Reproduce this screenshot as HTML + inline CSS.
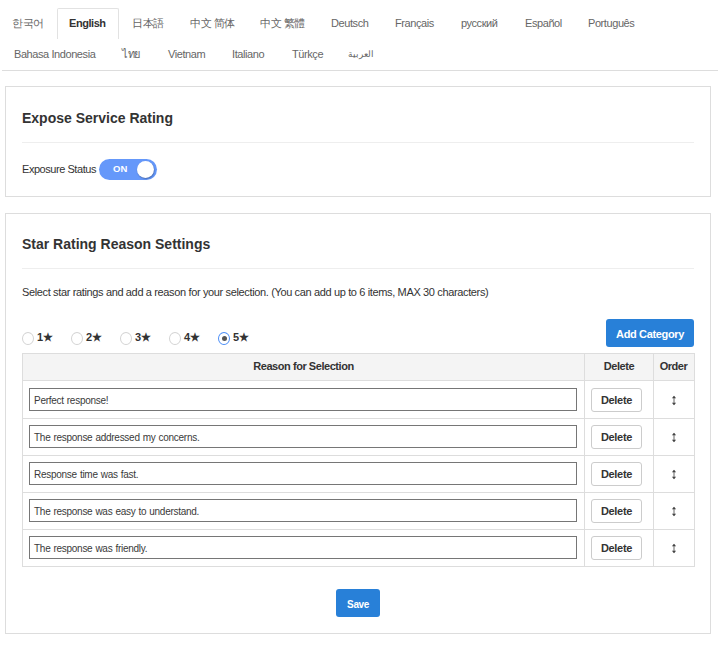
<!DOCTYPE html>
<html><head><meta charset="utf-8">
<style>
*{box-sizing:border-box;margin:0;padding:0}
html,body{width:718px;height:646px;overflow:hidden;background:#fff;font-family:"Liberation Sans",sans-serif;color:#333}
.a{position:absolute;white-space:nowrap}
.tab{font-size:11px;line-height:13px;color:#666;letter-spacing:-0.42px}
.tabact{position:absolute;left:57px;top:8px;width:62px;height:31px;border:1px solid #e2e2e2;border-bottom:none;border-radius:2px 2px 0 0;background:#fff}
.navline{position:absolute;left:2px;top:70px;width:716px;height:1px;background:#ddd}
.box{position:absolute;left:5px;width:706px;border:1px solid #ddd;background:#fff}
.h{font-size:14px;font-weight:bold;line-height:17px;color:#333}
.hr{position:absolute;left:22px;width:672px;height:1px;background:#eee}
.t11{font-size:11px;line-height:13px;color:#333;letter-spacing:-0.45px}
.toggle{position:absolute;left:99px;top:159px;width:58px;height:21px;border-radius:11px;background:#6598fa}
.toggle .on{position:absolute;left:14px;top:3px;font-size:9.5px;letter-spacing:0.1px;line-height:13px;font-weight:bold;color:#fff}
.toggle .knob{position:absolute;left:38px;top:2px;width:17px;height:17px;border-radius:50%;background:#fff;box-shadow:0.5px 1px 1.5px rgba(0,0,0,.3)}
.radio{position:absolute;top:332px;width:12px;height:13px;border:1px solid #d4d4d4;border-radius:50%;background:#fff}
.radio.sel{border-color:#4d8ff7}
.radio.sel::after{content:"";position:absolute;left:2.5px;top:3px;width:5px;height:5px;border-radius:50%;background:#555}
.rl{font-size:11px;font-weight:bold;line-height:13px;color:#333;letter-spacing:-0.4px}
.btnblue{position:absolute;background:#2880d8;border-radius:3px;color:#fff;font-weight:bold;font-size:12px;text-align:center}
.tbl{position:absolute;left:22px;top:353px;width:673px;height:214px;border:1px solid #ddd}
.thead{position:absolute;left:0;top:0;width:671px;height:27px;background:#f4f4f4;border-bottom:1px solid #ddd}
.vl{position:absolute;top:0;width:1px;height:212px;background:#ddd}
.hl{position:absolute;left:0;width:671px;height:1px;background:#ddd}
.th{position:absolute;top:6px;font-size:11px;font-weight:bold;line-height:13px;color:#333;letter-spacing:-0.45px;text-align:center}
.inp{position:absolute;left:6px;width:548px;height:23px;border:1px solid #767676;border-radius:0;background:#fff}
.inp span{position:absolute;left:4px;top:5.5px;font-size:10px;line-height:12px;color:#3a3a3a;letter-spacing:-0.27px;word-spacing:0.5px}
.del{position:absolute;left:568px;width:51px;height:24px;border:1px solid #ccc;border-radius:3px;background:#fff}
.del span{position:absolute;left:0;width:49px;text-align:center;top:4.5px;font-size:11px;font-weight:bold;line-height:13px;color:#333;letter-spacing:-0.3px}
.ord{position:absolute;left:646.5px}
</style></head><body>
<div class="tabact"></div>
<div class="navline"></div>
<div class="a tab" style="left:12px;top:17px">한국어</div>
<div class="a tab" style="left:69px;top:17px;font-weight:bold;color:#333;letter-spacing:-0.45px">English</div>
<div class="a tab" style="left:132px;top:17px">日本語</div>
<div class="a tab" style="left:190px;top:17px">中文 简体</div>
<div class="a tab" style="left:260px;top:17px">中文 繁體</div>
<div class="a tab" style="left:331px;top:17px">Deutsch</div>
<div class="a tab" style="left:395px;top:17px">Français</div>
<div class="a tab" style="left:461px;top:17px">русский</div>
<div class="a tab" style="left:525px;top:17px">Español</div>
<div class="a tab" style="left:588px;top:17px">Português</div>
<div class="a tab" style="left:14px;top:48px">Bahasa Indonesia</div>
<div class="a tab" style="left:122px;top:48px">ไทย</div>
<div class="a tab" style="left:168px;top:48px">Vietnam</div>
<div class="a tab" style="left:232px;top:48px">Italiano</div>
<div class="a tab" style="left:292px;top:48px">Türkçe</div>
<div class="a tab" style="left:348px;top:48px;font-size:9px">العربية</div>

<div class="box" style="top:86px;height:111px"></div>
<div class="a h" style="left:22px;top:110px">Expose Service Rating</div>
<div class="hr" style="top:142px"></div>
<div class="a t11" style="left:22px;top:163px">Exposure Status</div>
<div class="toggle"><div class="on">ON</div><div class="knob"></div></div>

<div class="box" style="top:213px;height:421px"></div>
<div class="a h" style="left:22px;top:236px">Star Rating Reason Settings</div>
<div class="hr" style="top:268px"></div>
<div class="a t11" style="left:22px;top:286px;letter-spacing:-0.36px">Select star ratings and add a reason for your selection. (You can add up to 6 items, MAX 30 characters)</div>

<div class="radio" style="left:22px"></div><div class="a rl" style="left:37px;top:331px">1★</div>
<div class="radio" style="left:71px"></div><div class="a rl" style="left:86px;top:331px">2★</div>
<div class="radio" style="left:120px"></div><div class="a rl" style="left:135px;top:331px">3★</div>
<div class="radio" style="left:169px"></div><div class="a rl" style="left:184px;top:331px">4★</div>
<div class="radio sel" style="left:218px"></div><div class="a rl" style="left:233px;top:331px">5★</div>

<div class="btnblue" style="left:606px;top:319px;width:88px;height:28px;line-height:30px;font-size:11px;letter-spacing:-0.35px">Add Category</div>

<div class="tbl">
  <div class="thead"></div>
  <div class="vl" style="left:561px"></div>
  <div class="vl" style="left:630px"></div>
  <div class="th" style="left:0;width:561px">Reason for Selection</div>
  <div class="th" style="left:562px;width:68px">Delete</div>
  <div class="th" style="left:630px;width:41px">Order</div>
  <div class="hl" style="top:64px"></div>
  <div class="hl" style="top:101px"></div>
  <div class="hl" style="top:138px"></div>
  <div class="hl" style="top:175px"></div>

  <div class="inp" style="top:34px"><span>Perfect response!</span></div>
  <div class="del" style="top:34px"><span>Delete</span></div>
  <svg class="ord" style="top:41px" width="8" height="11" viewBox="0 0 8 11"><path d="M4 1.5V9.5" stroke="#555" stroke-width="0.9"/><path d="M1.9 3.2L4 0.7L6.1 3.2Z M1.9 7.8L4 10.3L6.1 7.8Z" fill="#444"/></svg>

  <div class="inp" style="top:71px"><span>The response addressed my concerns.</span></div>
  <div class="del" style="top:71px"><span>Delete</span></div>
  <svg class="ord" style="top:78px" width="8" height="11" viewBox="0 0 8 11"><path d="M4 1.5V9.5" stroke="#555" stroke-width="0.9"/><path d="M1.9 3.2L4 0.7L6.1 3.2Z M1.9 7.8L4 10.3L6.1 7.8Z" fill="#444"/></svg>

  <div class="inp" style="top:108px"><span>Response time was fast.</span></div>
  <div class="del" style="top:108px"><span>Delete</span></div>
  <svg class="ord" style="top:115px" width="8" height="11" viewBox="0 0 8 11"><path d="M4 1.5V9.5" stroke="#555" stroke-width="0.9"/><path d="M1.9 3.2L4 0.7L6.1 3.2Z M1.9 7.8L4 10.3L6.1 7.8Z" fill="#444"/></svg>

  <div class="inp" style="top:145px"><span>The response was easy to understand.</span></div>
  <div class="del" style="top:145px"><span>Delete</span></div>
  <svg class="ord" style="top:152px" width="8" height="11" viewBox="0 0 8 11"><path d="M4 1.5V9.5" stroke="#555" stroke-width="0.9"/><path d="M1.9 3.2L4 0.7L6.1 3.2Z M1.9 7.8L4 10.3L6.1 7.8Z" fill="#444"/></svg>

  <div class="inp" style="top:182px"><span>The response was friendly.</span></div>
  <div class="del" style="top:182px"><span>Delete</span></div>
  <svg class="ord" style="top:189px" width="8" height="11" viewBox="0 0 8 11"><path d="M4 1.5V9.5" stroke="#555" stroke-width="0.9"/><path d="M1.9 3.2L4 0.7L6.1 3.2Z M1.9 7.8L4 10.3L6.1 7.8Z" fill="#444"/></svg>
</div>

<div class="btnblue" style="left:336px;top:589px;width:44px;height:28px;line-height:31.5px;font-size:10px;letter-spacing:-0.4px">Save</div>
</body></html>
